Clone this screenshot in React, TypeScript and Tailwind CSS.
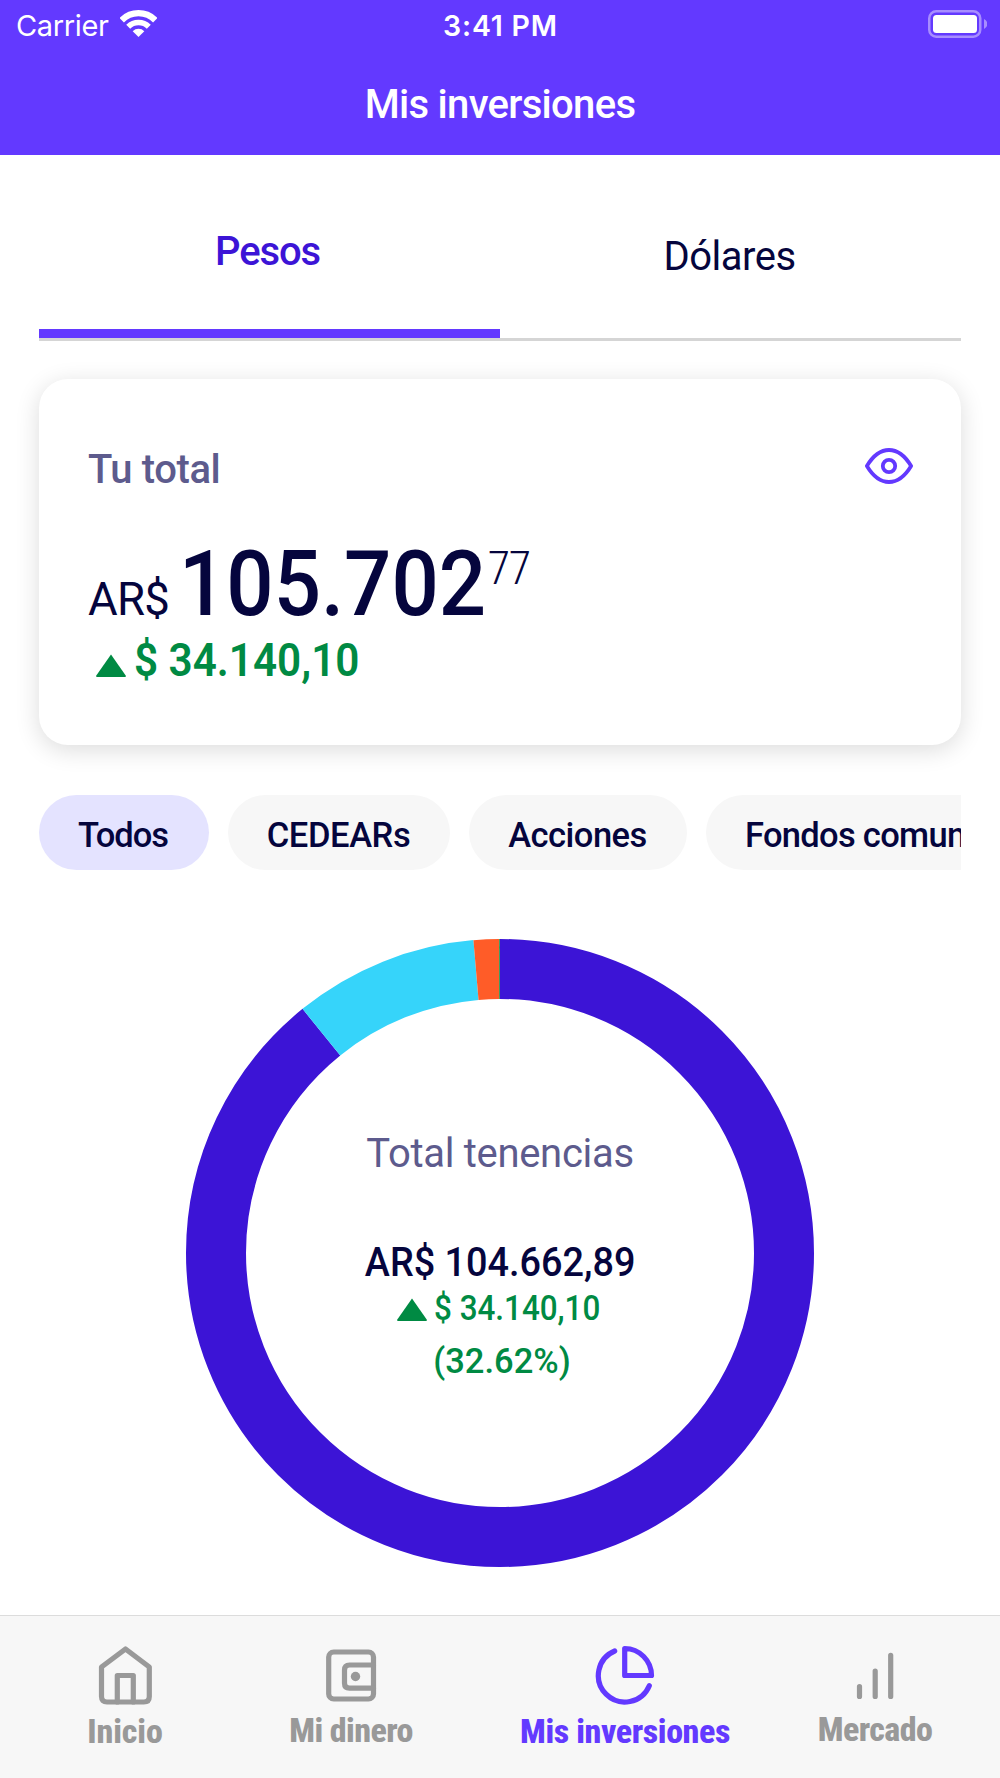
import React from "react";

const filters = [
  { label: "Todos", className: "w-[170px] bg-[#e4e3ff] pr-0.5 tracking-[-1px]" },
  { label: "CEDEARs", className: "w-[222px] bg-[#f7f7f7] pr-px tracking-[-0.4px]" },
  { label: "Acciones", className: "w-[218px] bg-[#f7f7f7] pr-px tracking-[-0.5px]" },
  { label: "Fondos comunes", className: "px-[39px] bg-[#f7f7f7] tracking-[-0.7px]" },
];

// share of the portfolio, in degrees
const slices = [
  { color: "#3c14d6", degrees: 320.9 },
  { color: "#36d4fa", degrees: 34.1 },
  { color: "#ff5c28", degrees: 4.7 },
  { color: "#008a43", degrees: 0.3 },
];

function StatusBar() {
  return (
    <div className="grid h-[50px] grid-cols-3 items-center pr-[13px] pl-4 font-['Inter',sans-serif] text-[29px] leading-none">
      <div className="flex items-center gap-[11px]">
        <span className="tracking-[-0.35px]">Carrier</span>
        <svg viewBox="0 0 37 27" className="mb-[3px] h-[27px] w-[37px]" fill="none" stroke="currentColor">
          <path d="M1.7 10.2A23.7 23.7 0 0 1 35.3 10.2" strokeWidth="6.3" />
          <path d="M8.2 16.7A14.6 14.6 0 0 1 28.8 16.7" strokeWidth="5.6" />
          <path d="M18.5 27L12.7 21.2A8.2 8.2 0 0 1 24.3 21.2Z" fill="currentColor" stroke="none" />
        </svg>
      </div>
      <div className="pt-0.5 pr-0.5 text-center text-[28.5px] font-[570] tracking-[0.8px]">3:41 PM</div>
      <svg viewBox="0 0 60 28" className="mb-[2px] h-7 w-[60px] justify-self-end">
        <rect x="2.25" y="1.25" width="51" height="25.5" rx="7" fill="none" stroke="#a78dff" strokeWidth="2.5" />
        <rect x="6" y="5" width="44" height="18" rx="3.5" fill="#fff" />
        <path d="M57 9Q60.5 11 60.5 14Q60.5 17 57 19Z" fill="#a78dff" />
      </svg>
    </div>
  );
}

function Tabs() {
  return (
    <div className="mx-[39px] flex h-[186px] border-b-[3px] border-[#d5d5d5] text-[40px] leading-none">
      <div className="flex w-1/2 items-center justify-center border-b-[9px] border-[#6339ff] pt-5 pr-1 font-[470] tracking-[-1.1px] text-[#3c14d6]">
        Pesos
      </div>
      <div className="flex w-1/2 items-center justify-center pt-[21px] pr-0.5 tracking-[-0.5px]">Dólares</div>
    </div>
  );
}

function Triangle() {
  return (
    <svg viewBox="0 0 30 23" className="h-[23px] w-[30px] shrink-0" fill="#008a43">
      <path d="M15 0.5L29.7 21.5V23H0.3V21.5Z" />
    </svg>
  );
}

function TotalCard() {
  return (
    <div className="mx-[39px] mt-[38px] flex h-[366px] items-start justify-between rounded-[29px] bg-white pt-[67px] pr-12 pl-[49px] shadow-[0_5px_24px_rgba(0,0,0,0.14)]">
      <div>
        <p className="text-[40px] leading-[48px] font-[470] tracking-[-0.4px] text-[#5d5b8d]">Tu total</p>
        <p className="mt-11 h-[92px] text-[91px] leading-[92px] font-[480] whitespace-nowrap">
          <span className="mr-[10px] text-[45.5px] leading-none font-[450] tracking-[-0.7px]">AR$</span>
          <span className="inline-block origin-left scale-x-[0.915]">105.702</span>
          <span className="-ml-[27px] align-[31px] text-[46px] leading-none font-light tracking-[-1.5px] [font-stretch:75%]">77</span>
        </p>
        <div className="mt-1.5 ml-2 flex items-center gap-2 text-[46px] leading-[48px] font-[570] text-[#008a43]">
          <span className="pt-2.5">
            <Triangle />
          </span>
          <span className="origin-left scale-x-[0.918]">$ 34.140,10</span>
        </div>
      </div>
      <svg viewBox="0 0 48 36" className="mt-[2px] h-9 w-12" fill="none" stroke="#6339ff" strokeWidth="3.8" strokeLinejoin="round">
        <path d="M1.9 18Q11.5 2 24 2T46.1 18Q36.5 34 24 34T1.9 18Z" />
        <circle cx="24" cy="18" r="6.2" />
      </svg>
    </div>
  );
}

function Filters() {
  return (
    <div className="mx-[39px] mt-[50px] flex gap-[19px] overflow-hidden text-[34.5px] leading-none font-[470]">
      {filters.map((filter) => (
        <div
          key={filter.label}
          className={`flex h-[75px] shrink-0 items-center justify-center rounded-full pt-[5px] whitespace-nowrap ${filter.className}`}
        >
          {filter.label}
        </div>
      ))}
    </div>
  );
}

function Holdings() {
  const radius = 284;
  const length = 2 * Math.PI * radius;
  let start = 0;

  return (
    <div className="relative mx-auto mt-[69px] h-[628px] w-[628px]">
      <svg viewBox="0 0 628 628" className="h-full w-full -rotate-90" fill="none" strokeWidth="60">
        {slices.map((slice) => {
          const dash = (slice.degrees / 360) * length;
          const offset = -(start / 360) * length;
          start += slice.degrees;
          return (
            <circle
              key={slice.color}
              cx="314"
              cy="314"
              r={radius}
              stroke={slice.color}
              strokeDasharray={`${dash} ${length - dash}`}
              strokeDashoffset={offset}
            />
          );
        })}
      </svg>
      <div className="absolute inset-0 flex flex-col items-center pt-[191px]">
        <p className="text-[40px] leading-[48px] font-[370] tracking-[-0.3px] text-[#5d5b8d]">Total tenencias</p>
        <p className="mt-[61px] scale-x-[0.945] text-[40px] leading-[48px] font-[480]">AR$ 104.662,89</p>
        <div className="mt-px flex items-center gap-[7px] pr-[3px] text-[34.5px] leading-10 font-[470] text-[#008a43]">
          <span className="pt-[3px]">
            <Triangle />
          </span>
          <span className="-mr-[17px] origin-left scale-x-[0.91]">$ 34.140,10</span>
        </div>
        <p className="mt-[13px] pl-1 text-[34.5px] leading-10 font-[470] text-[#008a43]">(32.62%)</p>
      </div>
    </div>
  );
}

function HomeIcon() {
  return (
    <>
      <path d="M30.5 4L54.3 22V51.5Q54.3 57 48.8 57H12Q6.5 57 6.5 51.5V22Z" />
      <path d="M22.3 57V30.5H38.3V57" />
    </>
  );
}

function WalletIcon() {
  return (
    <>
      <rect x="7.7" y="7" width="44.8" height="47" rx="5" />
      <path d="M52.5 20H28.5Q23.5 20 23.5 25V38.2Q23.5 43.2 28.5 43.2H52.5" />
      <circle cx="34.5" cy="31.5" r="4.7" fill="currentColor" stroke="none" />
    </>
  );
}

function PieIcon() {
  return (
    <>
      <path d="M29.7 3.5V30.5H56.5A27 27 0 0 0 29.7 3.5Z" />
      <path d="M19.7 6A26.5 26.5 0 1 0 54.3 40.7" />
    </>
  );
}

function BarsIcon() {
  return <path d="M14.5 41.5V51.5M30.2 26V51.5M45.7 10.3V51.5" />;
}

const navItems = [
  { label: "Inicio", icon: <HomeIcon />, className: "text-[#999999]", labelClass: "mt-1.5 tracking-[-0.1px]" },
  { label: "Mi dinero", icon: <WalletIcon />, className: "pr-[48px] text-[#999999]", labelClass: "mt-[5px] tracking-[-0.6px]" },
  { label: "Mis inversiones", icon: <PieIcon />, className: "text-[#6339ff]", labelClass: "mt-1.5 tracking-[-0.4px]" },
  { label: "Mercado", icon: <BarsIcon />, className: "text-[#999999]", labelClass: "mt-1 tracking-[-0.6px]" },
];

function BottomNav() {
  return (
    <nav className="grid h-[163px] grid-cols-4 border-t border-[#dcdcdc] bg-[#f7f7f7] pt-[29px]">
      {navItems.map((item) => (
        <div key={item.label} className={`flex flex-col items-center ${item.className}`}>
          <svg
            viewBox="0 0 60 60"
            className="h-[60px] w-[60px]"
            fill="none"
            stroke="currentColor"
            strokeWidth="5.2"
            strokeLinecap="round"
            strokeLinejoin="round"
          >
            {item.icon}
          </svg>
          <span className={`text-[34px] leading-10 font-extrabold whitespace-nowrap [font-stretch:75%] ${item.labelClass}`}>
            {item.label}
          </span>
        </div>
      ))}
    </nav>
  );
}

export default function App() {
  return (
    <div className="flex h-[1778px] w-[1000px] flex-col overflow-hidden bg-white font-['Roboto',sans-serif] text-[#05053d]">
      <header className="h-[155px] shrink-0 bg-[#6339ff] text-white">
        <StatusBar />
        <h1 className="flex h-[105px] items-center justify-center pt-[5px] text-[40px] leading-none font-[470] tracking-[-0.7px]">
          Mis inversiones
        </h1>
      </header>
      <main className="flex-1">
        <Tabs />
        <TotalCard />
        <Filters />
        <Holdings />
      </main>
      <BottomNav />
    </div>
  );
}
